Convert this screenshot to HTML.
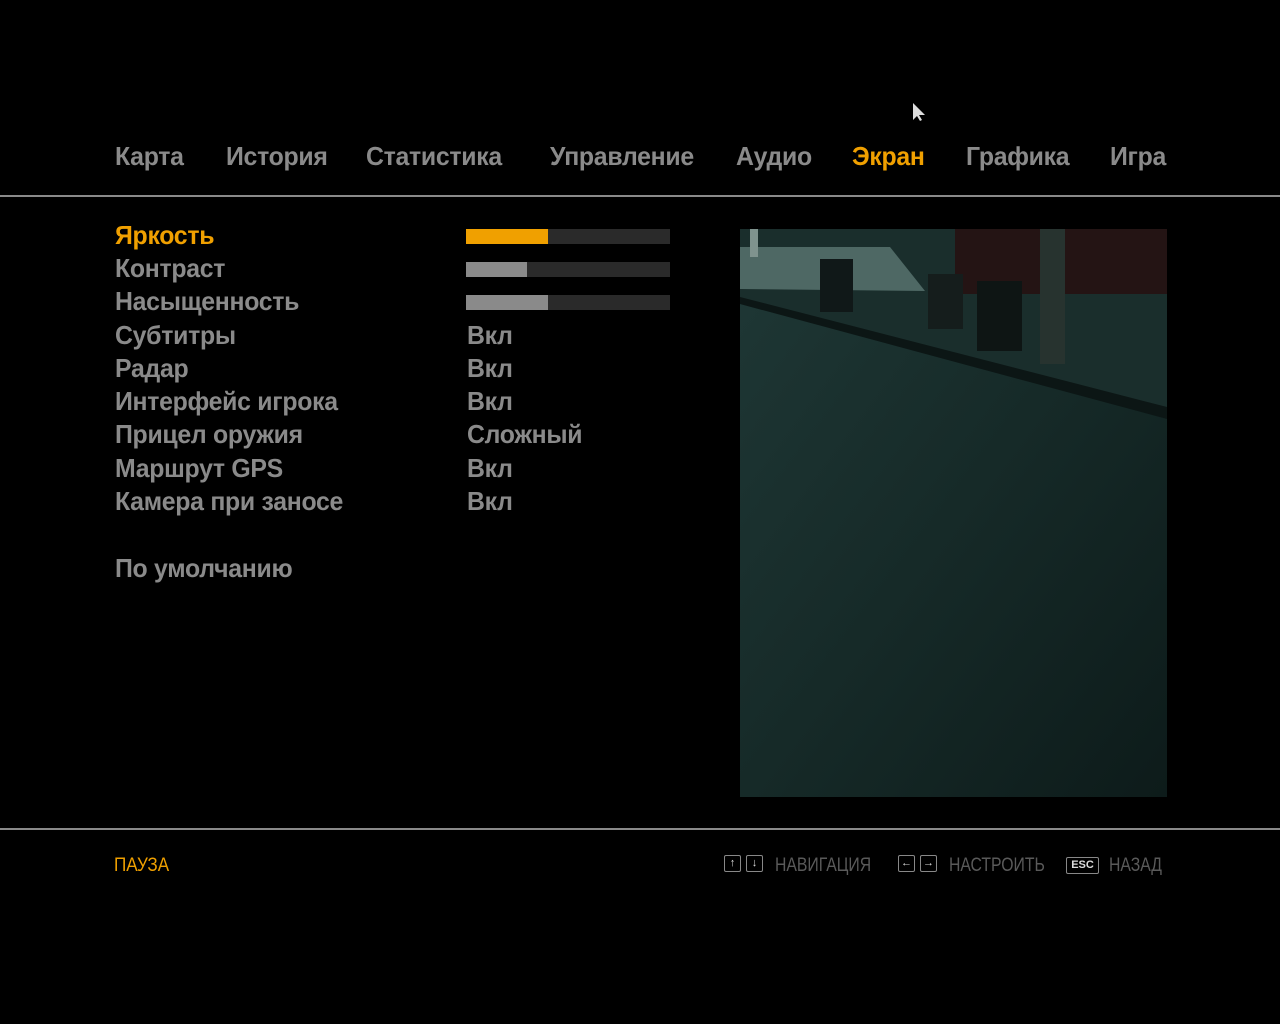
<!DOCTYPE html>
<html><head><meta charset="utf-8"><style>
body{margin:0;width:1280px;height:1024px;background:#000;overflow:hidden;position:relative;font-family:"Liberation Sans",sans-serif;font-weight:bold}
.t{position:absolute;font-size:26px;color:#8a8a8a;white-space:nowrap;line-height:30px;transform:scaleX(0.955);transform-origin:0 0;letter-spacing:-0.3px}
.o{color:#f0a000}
.hr{position:absolute;left:0;width:1280px;height:2px;background:#8a8a8a}
.bar{position:absolute;left:466px;width:204px;height:15px;background:#2a2a2a}
.bar i{position:absolute;left:0;top:0;height:15px;background:#8a8a8a}
.f{position:absolute;font-weight:normal;font-size:19px;color:#5a5a5a;top:855px;transform:scaleX(0.83);transform-origin:0 0;white-space:nowrap}
.k{position:absolute;top:855px;width:15px;height:15px;border:1px solid #888;border-radius:2px;color:#ddd;font-size:11px;line-height:15px;text-align:center}
</style></head><body>
<svg style="position:absolute;left:912px;top:102px" width="16" height="20"><path d="M1 1 L1 18 L5 14 L8 19 L10 18 L7 13 L13 13 Z" fill="#ddd"/></svg>
<div class="t" style="left:115px;top:141px">Карта</div>
<div class="t" style="left:226px;top:141px">История</div>
<div class="t" style="left:366px;top:141px">Статистика</div>
<div class="t" style="left:550px;top:141px">Управление</div>
<div class="t" style="left:736px;top:141px">Аудио</div>
<div class="t o" style="left:852px;top:141px">Экран</div>
<div class="t" style="left:966px;top:141px">Графика</div>
<div class="t" style="left:1110px;top:141px">Игра</div>
<div class="hr" style="top:195px"></div>
<div class="t o" style="left:115px;top:220px">Яркость</div>
<div class="t" style="left:115px;top:253px">Контраст</div>
<div class="t" style="left:115px;top:286px">Насыщенность</div>
<div class="t" style="left:115px;top:320px">Субтитры</div>
<div class="t" style="left:115px;top:353px">Радар</div>
<div class="t" style="left:115px;top:386px">Интерфейс игрока</div>
<div class="t" style="left:115px;top:419px">Прицел оружия</div>
<div class="t" style="left:115px;top:453px">Маршрут GPS</div>
<div class="t" style="left:115px;top:486px">Камера при заносе</div>
<div class="t" style="left:115px;top:553px">По умолчанию</div>
<div class="bar" style="top:229px"><i style="width:82px;background:#f0a000"></i></div>
<div class="bar" style="top:262px"><i style="width:61px"></i></div>
<div class="bar" style="top:295px"><i style="width:82px"></i></div>
<div class="t" style="left:467px;top:320px">Вкл</div>
<div class="t" style="left:467px;top:353px">Вкл</div>
<div class="t" style="left:467px;top:386px">Вкл</div>
<div class="t" style="left:467px;top:419px">Сложный</div>
<div class="t" style="left:467px;top:453px">Вкл</div>
<div class="t" style="left:467px;top:486px">Вкл</div>
<svg style="position:absolute;left:740px;top:229px" width="427" height="568">
<defs><linearGradient id="g" x1="0" y1="0" x2="1" y2="1"><stop offset="0" stop-color="#1f3836"/><stop offset="0.5" stop-color="#162a28"/><stop offset="1" stop-color="#0d1b1a"/></linearGradient></defs>
<rect width="427" height="568" fill="url(#g)"/>
<polygon points="0,0 427,0 427,190 0,70" fill="#1a2e2c"/>
<polygon points="0,18 150,18 185,62 0,60" fill="#4e6864"/>
<rect x="215" y="0" width="212" height="65" fill="#241414"/>
<polygon points="0,68 427,178 427,190 0,75" fill="#0c1615"/>
<rect x="80" y="30" width="33" height="53" fill="#101818"/>
<rect x="188" y="45" width="35" height="55" fill="#151d1c"/>
<rect x="237" y="52" width="45" height="70" fill="#0e1514"/>
<rect x="300" y="0" width="25" height="135" fill="#27332f"/>
<rect x="10" y="0" width="8" height="28" fill="#7f938e"/>
</svg>
<div class="hr" style="top:828px"></div>
<div class="f" style="left:114px;color:#f0a000;transform:scaleX(0.9)">ПАУЗА</div>
<div class="k" style="left:724px">↑</div><div class="k" style="left:746px">↓</div>
<div class="f" style="left:775px">НАВИГАЦИЯ</div>
<div class="k" style="left:898px">←</div><div class="k" style="left:920px">→</div>
<div class="f" style="left:949px">НАСТРОИТЬ</div>
<div class="k" style="left:1066px;width:31px;top:857px">ESC</div>
<div class="f" style="left:1109px">НАЗАД</div>
</body></html>
